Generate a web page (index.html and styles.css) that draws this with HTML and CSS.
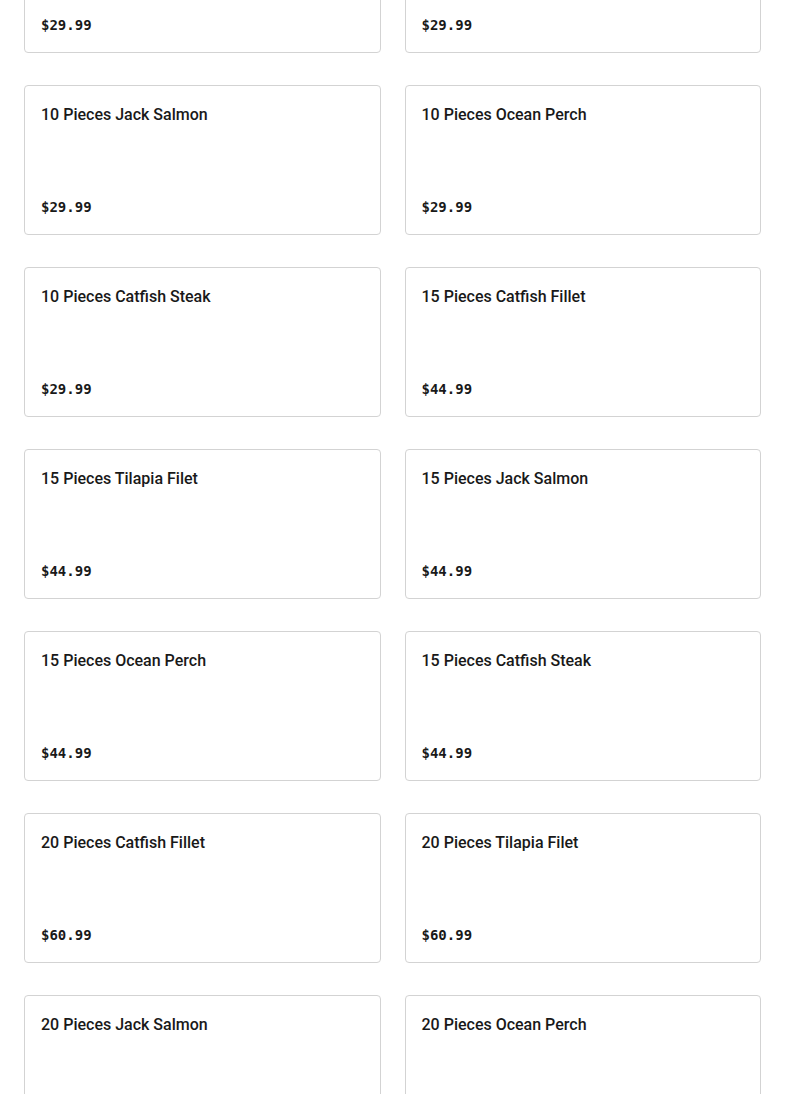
FILE: index.html
```html
<!DOCTYPE html>
<html lang="en">
<head>
    <meta charset="UTF-8">
    <title>Menu</title>
    <link rel="stylesheet" href="styles.css">
</head>
<body>
<div class="menu_grid">
    <div class="item"><div class="item_name">10 Pieces Tilapia Filet</div><div class="item_price">$29.99</div></div>
    <div class="item"><div class="item_name">10 Pieces Catfish Fillet</div><div class="item_price">$29.99</div></div>
    <div class="item"><div class="item_name">10 Pieces Jack Salmon</div><div class="item_price">$29.99</div></div>
    <div class="item"><div class="item_name">10 Pieces Ocean Perch</div><div class="item_price">$29.99</div></div>
    <div class="item"><div class="item_name">10 Pieces Catfish Steak</div><div class="item_price">$29.99</div></div>
    <div class="item"><div class="item_name">15 Pieces Catfish Fillet</div><div class="item_price">$44.99</div></div>
    <div class="item"><div class="item_name">15 Pieces Tilapia Filet</div><div class="item_price">$44.99</div></div>
    <div class="item"><div class="item_name">15 Pieces Jack Salmon</div><div class="item_price">$44.99</div></div>
    <div class="item"><div class="item_name">15 Pieces Ocean Perch</div><div class="item_price">$44.99</div></div>
    <div class="item"><div class="item_name">15 Pieces Catfish Steak</div><div class="item_price">$44.99</div></div>
    <div class="item"><div class="item_name">20 Pieces Catfish Fillet</div><div class="item_price">$60.99</div></div>
    <div class="item"><div class="item_name">20 Pieces Tilapia Filet</div><div class="item_price">$60.99</div></div>
    <div class="item"><div class="item_name">20 Pieces Jack Salmon</div><div class="item_price">$60.99</div></div>
    <div class="item"><div class="item_name">20 Pieces Ocean Perch</div><div class="item_price">$60.99</div></div>
</div>
</body>
</html>
```

FILE: styles.css
```css
* {
    margin: 0;
    padding: 0;
    box-sizing: border-box;
}

body {
    background: #fff;
    color: #191919;
    overflow: hidden;
}

.menu_grid {
    display: grid;
    grid-template-columns: 1fr 1fr;
    gap: 32px 24px;
    padding: 0 24px;
    margin-top: -97px;
}

.item {
    height: 150px;
    border: 1px solid #d3d3d3;
    border-radius: 4px;
    padding: 17px 16px;
    display: flex;
    flex-direction: column;
    justify-content: space-between;
}

.item_name {
    font-family: Roboto, "Liberation Sans", sans-serif;
    font-weight: 500;
    font-size: 16px;
    line-height: 24px;
}

.item_price {
    font-family: "DejaVu Sans Mono", monospace;
    font-weight: 700;
    font-size: 14px;
    line-height: 20px;
}
```
